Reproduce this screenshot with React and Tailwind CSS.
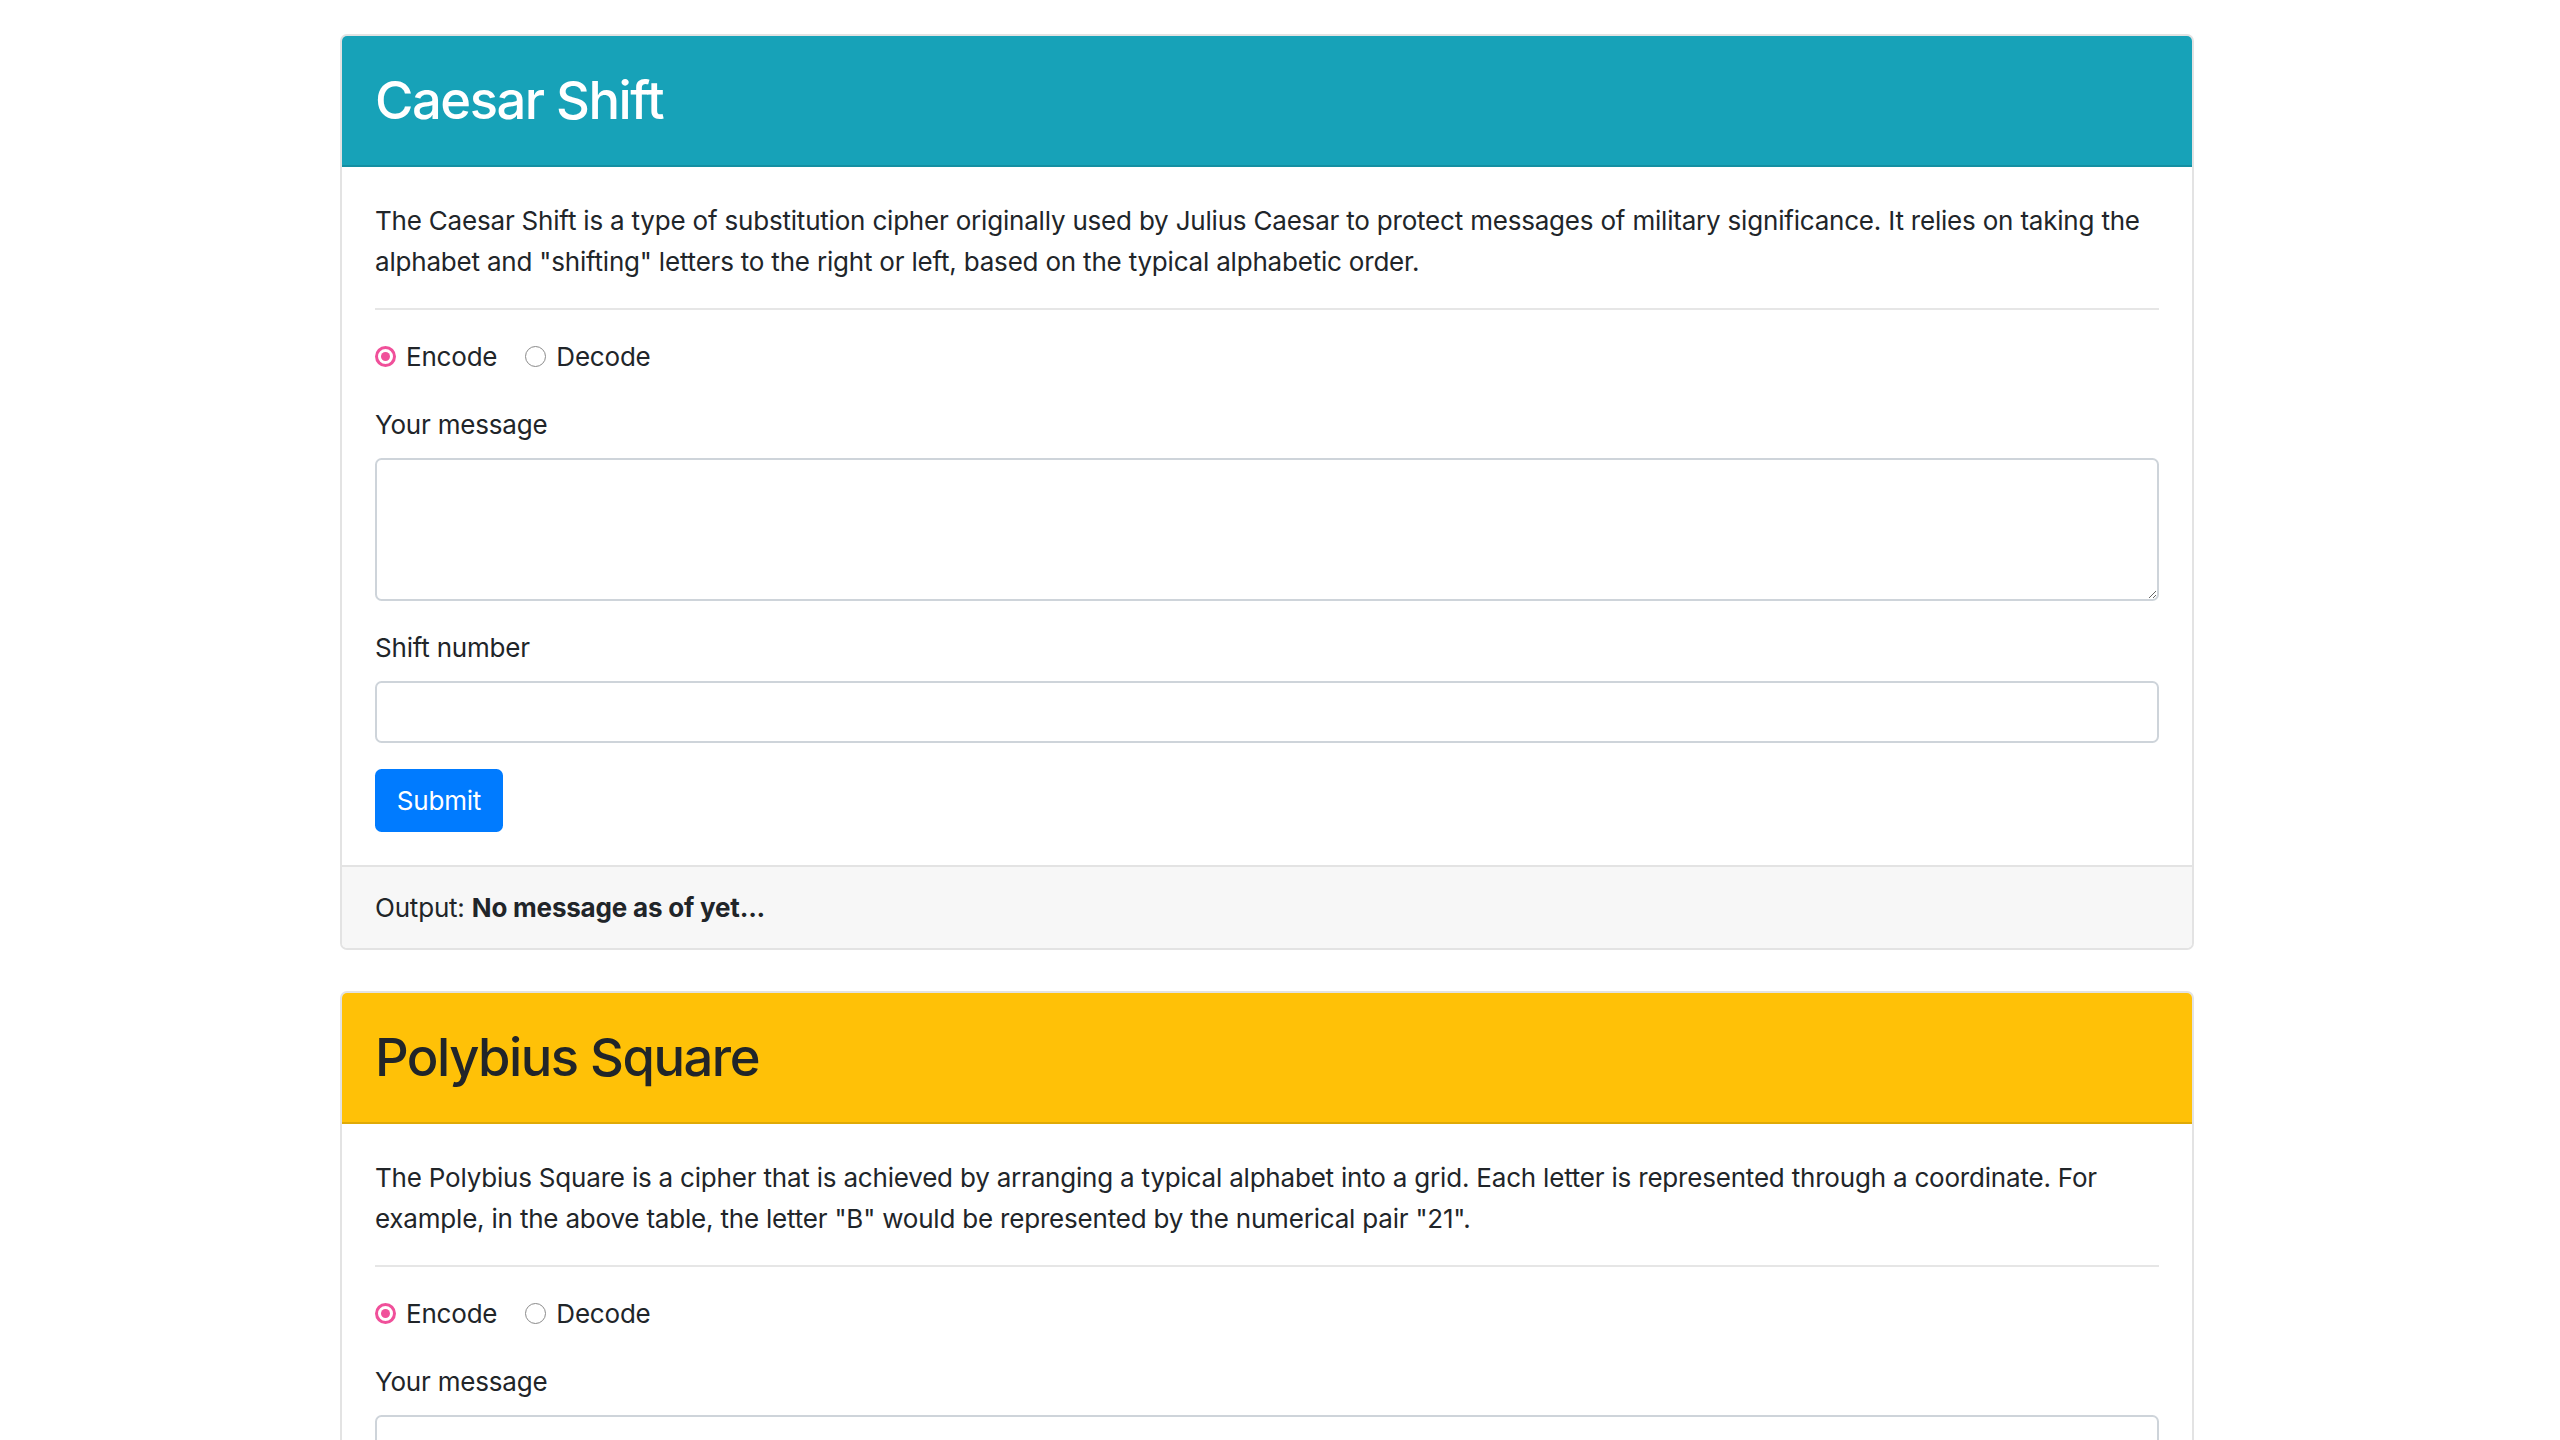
import { useState } from "react";

const ciphers = [
  {
    key: "caesar",
    title: "Caesar Shift",
    header: "bg-[#17a2b8] border-[#148fa2] text-white",
    description:
      'The Caesar Shift is a type of substitution cipher originally used by Julius Caesar to protect messages of military significance. It relies on taking the alphabet and "shifting" letters to the right or left, based on the typical alphabetic order.',
    extraLabel: "Shift number",
  },
  {
    key: "polybius",
    title: "Polybius Square",
    header: "bg-[#ffc107] border-[#e0aa06] text-[#212529]",
    description:
      'The Polybius Square is a cipher that is achieved by arranging a typical alphabet into a grid. Each letter is represented through a coordinate. For example, in the above table, the letter "B" would be represented by the numerical pair "21".',
    extraLabel: null,
  },
];

function Radio({ checked, label, onClick }) {
  return (
    <label className="flex items-center cursor-pointer" onClick={onClick}>
      {checked ? (
        <span className="w-[21px] h-[21px] rounded-full border-[3px] border-[#f0509a] bg-white flex items-center justify-center">
          <span className="w-[9px] h-[9px] rounded-full bg-[#f0509a]" />
        </span>
      ) : (
        <span className="w-[21px] h-[21px] rounded-full border-[1.5px] border-[#8a8a8a] bg-white" />
      )}
      <span className="ml-[10px]">{label}</span>
    </label>
  );
}

function CipherCard({ cipher }) {
  const [mode, setMode] = useState("encode");

  return (
    <div className="mb-[41px] rounded-[7px] border-2 border-[#e3e3e3] bg-white overflow-hidden">
      {/* header */}
      <div className={`${cipher.header} border-b-2 px-[33px] pt-[33px] pb-[20px]`}>
        <h2 className="mb-[13px] text-[52.5px] leading-[63px] font-medium tracking-[-1.5px]">{cipher.title}</h2>
      </div>

      {/* body */}
      <div className="px-[33px] py-[33px]">
        <p className="mb-[26px]">{cipher.description}</p>
        <hr className="mb-[26px] border-0 border-t-2 border-[#e6e6e6]" />

        <div className="flex items-center gap-[28px] h-[41px] mb-[27px]">
          <Radio checked={mode === "encode"} label="Encode" onClick={() => setMode("encode")} />
          <Radio checked={mode === "decode"} label="Decode" onClick={() => setMode("decode")} />
        </div>

        <label className="block mb-[13px]">Your message</label>
        <textarea className="block w-full h-[143px] mb-[26px] border-2 border-[#ced4da] rounded-[6.5px] px-[20px] py-[10px] outline-none" />

        {cipher.extraLabel && (
          <>
            <label className="block mb-[13px]">{cipher.extraLabel}</label>
            <input
              type="text"
              className="block w-full h-[62px] mb-[26px] border-2 border-[#ced4da] rounded-[6.5px] px-[20px] outline-none"
            />
          </>
        )}

        <button className="h-[63px] w-[128px] bg-[#007bff] text-white rounded-[6.5px]">Submit</button>
      </div>

      {/* footer */}
      <div className="bg-[#f7f7f7] border-t-2 border-[#e3e3e3] px-[33px] py-[20px]">
        Output: <span className="font-bold">No message as of yet...</span>
      </div>
    </div>
  );
}

export default function App() {
  return (
    <div className="min-h-screen bg-white font-['Inter',sans-serif] text-[26px] leading-[41px] tracking-[-0.2px] text-[#212529]">
      <div className="ml-[340px] w-[1854px] pt-[34px]">
        {ciphers.map((c) => (
          <CipherCard key={c.key} cipher={c} />
        ))}
      </div>
    </div>
  );
}
